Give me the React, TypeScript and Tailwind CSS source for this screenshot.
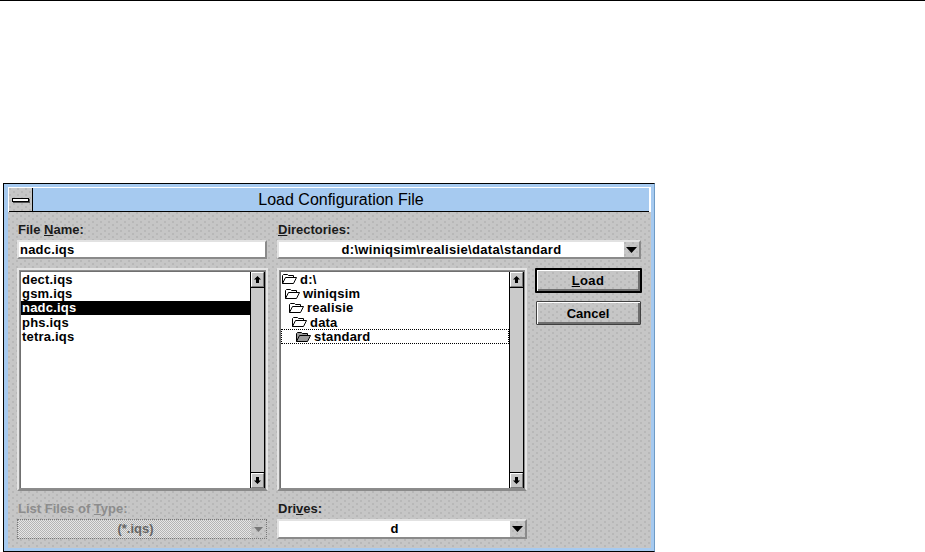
const dots =
  "bg-[#c6c6c6] bg-[radial-gradient(circle_at_1px_1px,#a8a8a8_0.6px,transparent_0.8px),radial-gradient(circle_at_5px_4px,#a8a8a8_0.6px,transparent_0.8px)] bg-[length:8px_6px]";
const font = "font-['Liberation_Sans',Arial,sans-serif]";

function Arrow({ down }: { down?: boolean }) {
  return (
    <svg width="7" height="7" viewBox="0 0 7 7" className={down ? "rotate-180" : ""}>
      <path d="M3.5 0 L7 3.5 H5 V7 H2 V3.5 H0 Z" fill="#000" />
    </svg>
  );
}

function ArrowButton({ down }: { down?: boolean }) {
  return (
    <div className="flex h-[15px] shrink-0 items-center justify-center border-[1px] border-t-white border-l-white border-r-[#7a7a7a] border-b-[#7a7a7a] bg-[#c6c6c6]">
      <Arrow down={down} />
    </div>
  );
}

function Scrollbar() {
  return (
    <div className="flex w-[15px] shrink-0 flex-col border-l border-r border-black bg-[#cacaca]">
      <div className="border-b border-black">
        <ArrowButton />
      </div>
      <div className="flex-1" />
      <div className="border-t border-black">
        <ArrowButton down />
      </div>
    </div>
  );
}

function ListBox({ children, width }: { children: React.ReactNode; width: string }) {
  return (
    <div className={`flex h-[223px] ${width} border-2 border-t-[#e4e4e4] border-l-[#e4e4e4] border-r-[#e4e4e4] border-b-[#8a8a8a] outline outline-1 -outline-offset-3 outline-[#8c8c8c] p-[1px]`}>
      <div className="flex flex-1 border-t border-l border-[#707070] bg-white">
        <div className="min-w-0 flex-1">{children}</div>
        <Scrollbar />
      </div>
    </div>
  );
}

function Row({ children, cls = "" }: { children: React.ReactNode; cls?: string }) {
  return <div className={`flex h-[14.35px] items-center text-[13px] font-bold leading-none tracking-[0.2px] text-black ${cls}`}>{children}</div>;
}

function Folder({ filled }: { filled?: boolean }) {
  return (
    <svg width="16" height="12" viewBox="0 0 16 12" className="shrink-0">
      <path
        d="M1.5 10.5 V2.5 L2.5 1.5 H6.5 L7.5 2.5 H12.5 V4.5 M1.5 10.5 L4.5 4.5 H15.5 L12.5 10.5 Z"
        fill={filled ? "#9a9a9a" : "none"}
        stroke="#000"
        strokeWidth="1"
      />
    </svg>
  );
}

function DirRow({ indent, name, filled, cls = "" }: { indent: string; name: string; filled?: boolean; cls?: string }) {
  return (
    <Row cls={`${indent} gap-[3px] ${cls}`}>
      <Folder filled={filled} />
      <span>{name}</span>
    </Row>
  );
}

function ComboArrow({ disabled }: { disabled?: boolean }) {
  return (
    <div className="flex w-[15px] shrink-0 items-center justify-center">
      {disabled ? (
        <svg width="9" height="5" viewBox="0 0 9 5">
          <path d="M0 0 H9 L4.5 5 Z" fill="#777" />
        </svg>
      ) : (
        <svg width="11" height="6" viewBox="0 0 11 6">
          <path d="M0 0 H11 L5.5 6 Z" fill="#000" />
        </svg>
      )}
    </div>
  );
}

export default function App() {
  return (
    <div className={`h-[552px] w-[925px] overflow-hidden border-t border-black bg-white pl-[3px] pt-[182px] ${font}`}>
      <div className="h-[369px] w-[652px] border-b border-l border-r border-t border-black border-r-[#6f9bc5] bg-[#a6caf0] pb-[3px] pl-[4px] pr-[3px] pt-[3px]">
        <div className="flex h-[25px] border-l border-r-2 border-t border-white bg-[#a6caf0]">
          <div className={`flex w-[24px] items-center justify-center border-b border-r border-black ${dots}`}>
            <div className="h-[4px] w-[17px] border border-black bg-white shadow-[1px_1px_0_#555]" />
          </div>
          <div className="flex flex-1 items-center justify-center border-b border-black text-[16px] text-black">
            Load Configuration File
          </div>
        </div>
        <div className={`grid h-[336px] grid-cols-[260px_258px_106px] grid-rows-[28px_28px_223px_28px_20px] pl-[9px] text-[13px] font-bold text-black ${dots}`}>
          <div className="flex items-center pl-[1px] pt-[8px] text-[#1a1a1a]">
            <span>File <u>N</u>ame:</span>
          </div>
          <div className="col-span-2 flex items-center pl-[1px] pt-[8px] text-[#1a1a1a]">
            <span><u>D</u>irectories:</span>
          </div>

          <div className="h-[19px] w-[250px] border-2 border-b-[#8a8a8a] border-l-[#e2e2e2] border-r-[#8a8a8a] border-t-[#e2e2e2] bg-white pl-[1px] text-[13px] leading-[15px] tracking-[0.2px]">
            nadc.iqs
          </div>
          <div className="col-span-2 flex h-[19px] w-[364px] border-2 border-b-[#8a8a8a] border-l-[#e2e2e2] border-r-[#8a8a8a] border-t-[#e2e2e2]">
            <div className="flex-1 bg-white text-center text-[13px] leading-[15px] tracking-[0.33px]">d:\winiqsim\realisie\data\standard</div>
            <ComboArrow />
          </div>

          <ListBox width="w-[251px]">
            <div className="pl-[1px]">
              <Row>dect.iqs</Row>
              <Row>gsm.iqs</Row>
            </div>
            <Row cls="bg-black pl-[1px] !text-white">nadc.iqs</Row>
            <div className="pl-[1px]">
              <Row>phs.iqs</Row>
              <Row>tetra.iqs</Row>
            </div>
          </ListBox>
          <ListBox width="w-[250px]">
            <DirRow indent="pl-[0px]" name="d:\" />
            <DirRow indent="pl-[3px]" name="winiqsim" />
            <DirRow indent="pl-[7px]" name="realisie" />
            <DirRow indent="pl-[10px]" name="data" />
            <DirRow indent="pl-[14px]" name="standard" filled cls="outline-1 -outline-offset-1 outline-black outline-dotted" />
          </ListBox>
          <div className="flex flex-col items-center">
            <div className="flex h-[25px] w-[107px] items-center justify-center rounded-[1px] border-2 border-black text-[13px] tracking-[0.4px] shadow-[inset_1px_1px_0_#fff,inset_-2px_-2px_0_#6e6e6e]">
              <span><u>L</u>oad</span>
            </div>
            <div className="mt-[8px] flex h-[24px] w-[105px] items-center justify-center rounded-[1px] border border-[#404040] pt-[1px] text-[13px] shadow-[inset_1px_1px_0_#fff,inset_-2px_-2px_0_#6e6e6e]">
              Cancel
            </div>
          </div>

          <div className="flex items-center pl-[1px] pt-[7px] text-[#8c8c8c]">
            <span>List Files of <u>T</u>ype:</span>
          </div>
          <div className="col-span-2 flex items-center pl-[1px] pt-[7px] text-[#1a1a1a]">
            <span>Dri<u>v</u>es:</span>
          </div>

          <div className="flex h-[20px] w-[250px] border border-dotted border-[#777]">
            <div className="flex flex-1 items-center justify-center bg-[repeating-conic-gradient(#e6e6e6_0_25%,#b4b4b4_0_50%)] bg-[length:2px_2px] pl-[2px] text-[13px] text-[#666]">
              (*.iqs)
            </div>
            <ComboArrow disabled />
          </div>
          <div className="col-span-2 flex h-[20px] w-[250px] border-2 border-b-[#8a8a8a] border-l-[#e2e2e2] border-r-[#8a8a8a] border-t-[#e2e2e2]">
            <div className="flex-1 bg-white text-center text-[13px] leading-[16px]">d</div>
            <ComboArrow />
          </div>
        </div>
      </div>
    </div>
  );
}
